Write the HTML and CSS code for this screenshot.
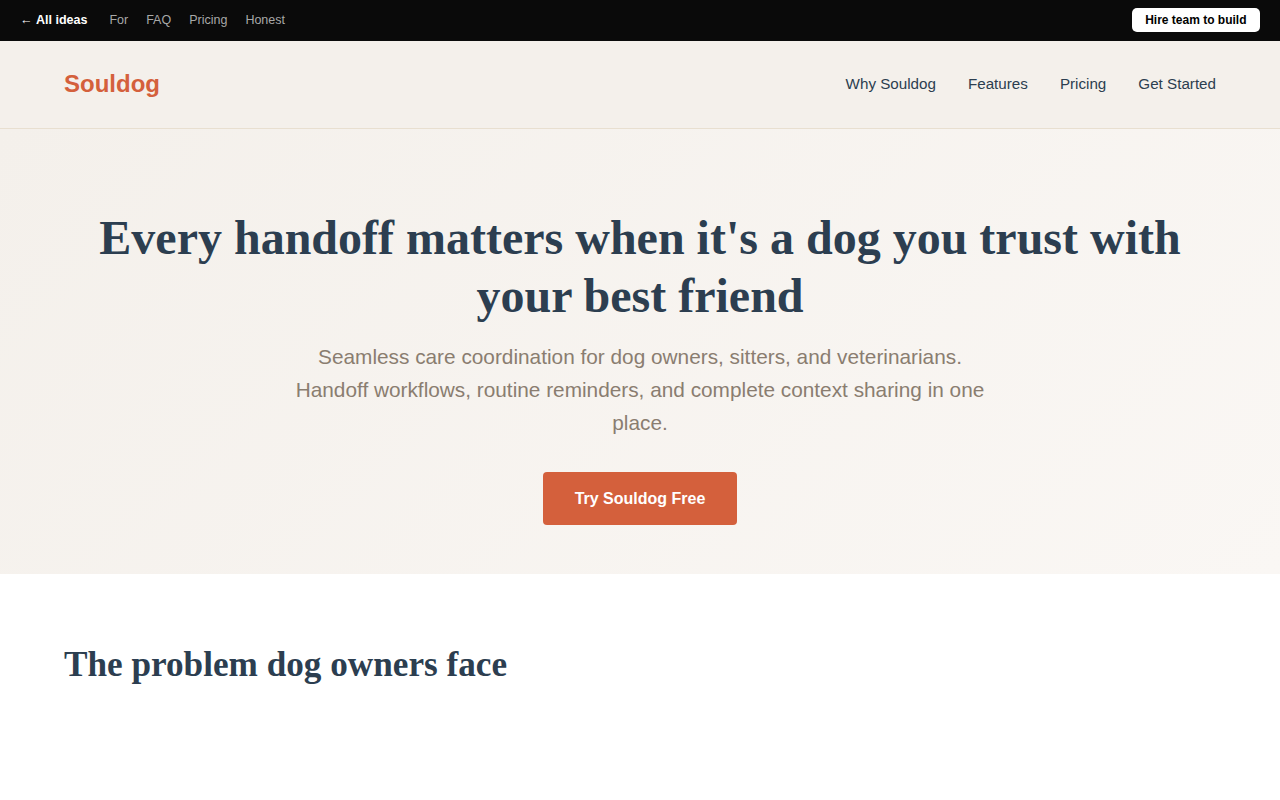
FILE: index.html
```html
<!DOCTYPE html>
<html lang="en">
<head>
    <meta charset="UTF-8">
    <meta name="viewport" content="width=device-width, initial-scale=1.0">
    <title>Souldog</title>
    <link rel="stylesheet" href="styles.css">
</head>
<body>
    <div class="topbar">
        <div class="topbar-links">
            <a href="#" class="back">&larr; <strong>All ideas</strong></a>
            <a href="#">For</a>
            <a href="#">FAQ</a>
            <a href="#">Pricing</a>
            <a href="#">Honest</a>
        </div>
        <a href="#" class="hire">Hire team to build</a>
    </div>

    <header class="site-header">
        <a href="#" class="logo">Souldog</a>
        <nav class="main-nav">
            <a href="#">Why Souldog</a>
            <a href="#">Features</a>
            <a href="#">Pricing</a>
            <a href="#">Get Started</a>
        </nav>
    </header>

    <section class="hero">
        <h1>Every handoff matters when it's a dog you trust with your best friend</h1>
        <p class="lead">Seamless care coordination for dog owners, sitters, and veterinarians. Handoff workflows, routine reminders, and complete context sharing in one place.</p>
        <a href="#" class="cta">Try Souldog Free</a>
    </section>

    <section class="problem">
        <h2>The problem dog owners face</h2>
    </section>
</body>
</html>
```

FILE: styles.css
```css
body {
    margin: 0;
    font-family: "Liberation Sans", Arial, sans-serif;
    color: #2c3e50;
    background: #fff;
}
a {
    text-decoration: none;
    color: inherit;
}
.topbar {
    height: 41px;
    background-color: #0a0a0a;
    display: flex;
    align-items: center;
    justify-content: space-between;
    padding: 0 20px;
    font-size: 12.5px;
}
.topbar-links {
    display: flex;
    gap: 18px;
    padding-bottom: 2px;
}
.topbar-links a {
    color: #a8a8a8;
}
.topbar-links .back {
    color: #fff;
    margin-right: 4px;
}
.hire {
    background: #fff;
    color: #000;
    font-weight: bold;
    font-size: 12px;
    line-height: 14px;
    padding: 5px 13.5px;
    border-radius: 5px;
    margin-bottom: 1px;
}
.site-header {
    height: 88px;
    box-sizing: border-box;
    background-color: #f4f0eb;
    border-bottom: 1px solid #e8dfd0;
    display: flex;
    align-items: center;
    justify-content: space-between;
    padding: 0 64px 2px;
}
.logo {
    color: #d4603c;
    font-size: 24px;
    font-weight: bold;
}
.main-nav {
    display: flex;
    gap: 32px;
    font-size: 15.2px;
}
.main-nav a {
    color: #2c3e50;
}
.hero {
    background: linear-gradient(135deg, #f4f0eb 0%, #faf7f4 100%);
    padding: 80px 64px 49px;
    text-align: center;
}
.hero h1 {
    font-family: "Liberation Serif", "Times New Roman", serif;
    font-size: 48px;
    line-height: 1.2;
    margin: 0 0 16px;
    color: #2c3e50;
}
.lead {
    max-width: 700px;
    margin: 0 auto 33px;
    font-size: 20.8px;
    line-height: 33px;
    color: #8a7d70;
}
.cta {
    display: inline-block;
    background-color: #d4603c;
    color: #fff;
    font-weight: bold;
    font-size: 16px;
    line-height: 21px;
    padding: 16px 32px;
    border-radius: 4px;
}
.problem {
    padding: 71px 64px 40px;
}
.problem h2 {
    font-family: "Liberation Serif", "Times New Roman", serif;
    font-size: 35.2px;
    margin: 0;
    color: #2c3e50;
}
```
